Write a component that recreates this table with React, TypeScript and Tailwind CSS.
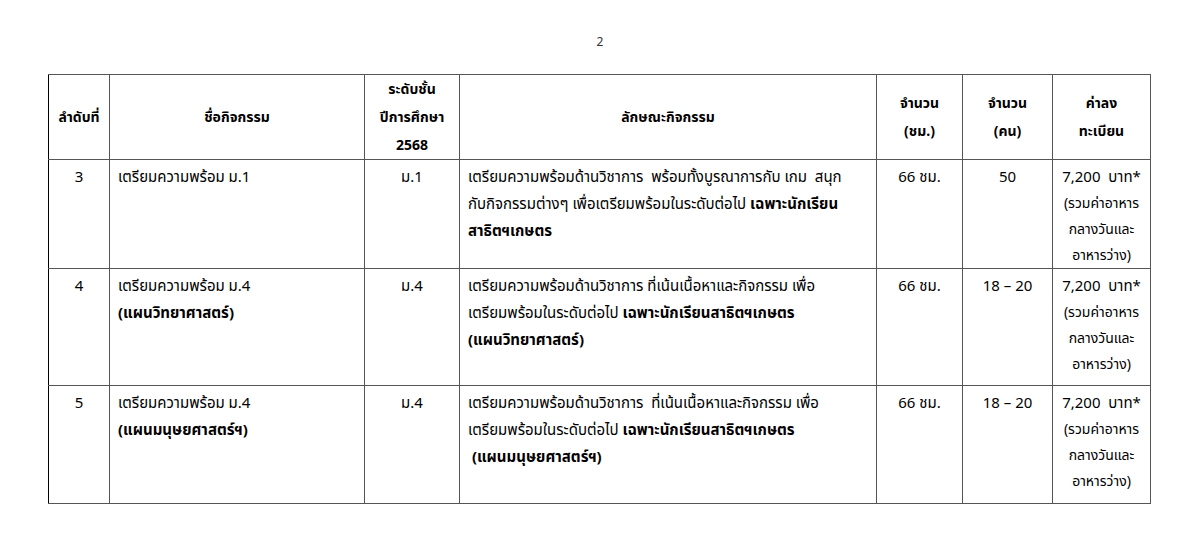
import React from "react";

const cell = "border border-[#555] px-2 pt-[3px] align-top";
const head = "border border-[#555] px-1 align-middle text-center font-bold leading-[28px] text-[14px]";

const Fee = () => (
  <div className="text-center leading-[26px]">
    <div className="text-[15px] leading-[27px]">7,200&nbsp;&nbsp;บาท*</div>
    <div className="text-[14px]">(รวมค่าอาหาร</div>
    <div className="text-[14px]">กลางวันและ</div>
    <div className="text-[14px]">อาหารว่าง)</div>
  </div>
);

export default function App() {
  return (
    <div
      className="w-[1200px] h-[547px] bg-white text-black overflow-hidden"
      style={{ fontFamily: '"Noto Sans", "Noto Sans Thai", Tahoma, sans-serif' }}
    >
      <div className="pt-[33px] h-[74px] text-center text-[12px] text-[#333]">
        2
      </div>
      <table className="ml-[48px] w-[1102px] table-fixed border-collapse text-[15px] leading-[27px]">
        <colgroup>
          <col className="w-[61px]" />
          <col className="w-[255px]" />
          <col className="w-[95px]" />
          <col className="w-[417px]" />
          <col className="w-[86px]" />
          <col className="w-[90px]" />
          <col className="w-[98px]" />
        </colgroup>
        <thead>
          <tr className="h-[85px]">
            <th className={head + " border-l-black"}>ลำดับที่</th>
            <th className={head}>ชื่อกิจกรรม</th>
            <th className={head}>
              ระดับชั้น
              <br />
              ปีการศึกษา
              <br />
              2568
            </th>
            <th className={head}>ลักษณะกิจกรรม</th>
            <th className={head}>
              จำนวน
              <br />
              (ชม.)
            </th>
            <th className={head}>
              จำนวน
              <br />
              (คน)
            </th>
            <th className={head}>
              ค่าลง
              <br />
              ทะเบียน
            </th>
          </tr>
        </thead>
        <tbody>
          <tr className="h-[109px]">
            <td className={cell + " text-center border-l-black"}>3</td>
            <td className={cell}>เตรียมความพร้อม ม.1</td>
            <td className={cell + " text-center"}>ม.1</td>
            <td className={cell}>
              เตรียมความพร้อมด้านวิชาการ&nbsp; พร้อมทั้งบูรณาการกับ เกม&nbsp; สนุก
              <br />
              กับกิจกรรมต่างๆ เพื่อเตรียมพร้อมในระดับต่อไป <b>เฉพาะนักเรียน</b>
              <br />
              <b>สาธิตฯเกษตร</b>
            </td>
            <td className={cell + " text-center"}>66 ชม.</td>
            <td className={cell + " text-center"}>50</td>
            <td className={cell}>
              <Fee />
            </td>
          </tr>
          <tr className="h-[117px]">
            <td className={cell + " text-center border-l-black"}>4</td>
            <td className={cell}>
              เตรียมความพร้อม ม.4
              <br />
              <b>(แผนวิทยาศาสตร์)</b>
            </td>
            <td className={cell + " text-center"}>ม.4</td>
            <td className={cell}>
              เตรียมความพร้อมด้านวิชาการ ที่เน้นเนื้อหาและกิจกรรม เพื่อ
              <br />
              เตรียมพร้อมในระดับต่อไป <b>เฉพาะนักเรียนสาธิตฯเกษตร</b>
              <br />
              <b>(แผนวิทยาศาสตร์)</b>
            </td>
            <td className={cell + " text-center"}>66 ชม.</td>
            <td className={cell + " text-center"}>18 – 20</td>
            <td className={cell}>
              <Fee />
            </td>
          </tr>
          <tr className="h-[118px]">
            <td className={cell + " text-center border-l-black"}>5</td>
            <td className={cell}>
              เตรียมความพร้อม ม.4
              <br />
              <b>(แผนมนุษยศาสตร์ฯ)</b>
            </td>
            <td className={cell + " text-center"}>ม.4</td>
            <td className={cell}>
              เตรียมความพร้อมด้านวิชาการ&nbsp; ที่เน้นเนื้อหาและกิจกรรม เพื่อ
              <br />
              เตรียมพร้อมในระดับต่อไป <b>เฉพาะนักเรียนสาธิตฯเกษตร</b>
              <br />
              &nbsp;<b>(แผนมนุษยศาสตร์ฯ)</b>
            </td>
            <td className={cell + " text-center"}>66 ชม.</td>
            <td className={cell + " text-center"}>18 – 20</td>
            <td className={cell}>
              <Fee />
            </td>
          </tr>
        </tbody>
      </table>
    </div>
  );
}
